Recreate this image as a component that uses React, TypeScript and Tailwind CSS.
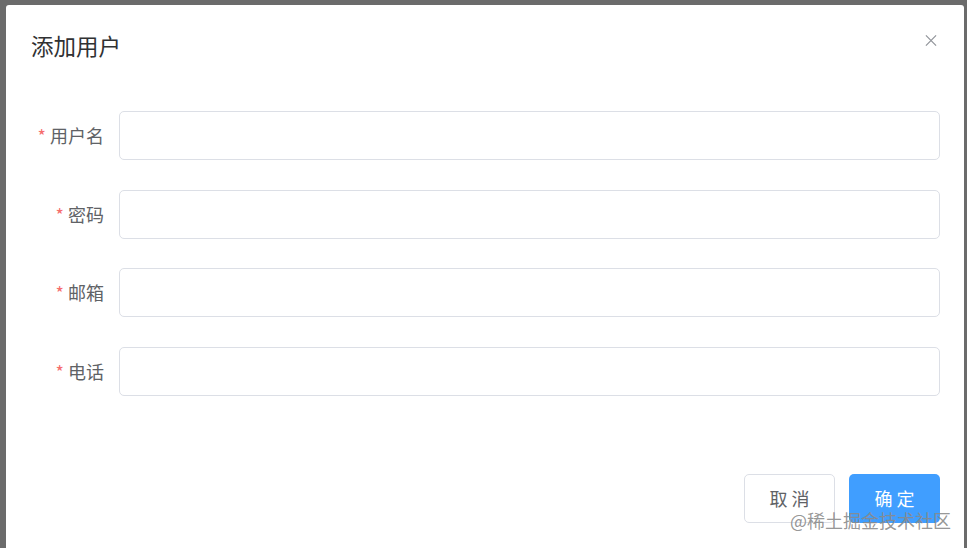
import React from 'react';

const fields = ['用户名', '密码', '邮箱', '电话'];

export default function App() {
    return (
        <div
            className="w-[967px] h-[548px] overflow-hidden bg-[#6b6b6b] pt-[5px] pl-[6px] pr-[3px] relative"
            style={{ fontFamily: '"Noto Sans CJK SC", "Noto Sans", sans-serif' }}
        >
            <div className="relative bg-white rounded-[3px] h-[600px] px-[24px]">
                {/* Header */}
                <div className="pt-[26px] pl-px h-[60px]">
                    <h2 className="text-[22.5px] leading-[29px] text-[#303133]">添加用户</h2>
                </div>
                <button className="absolute top-[28px] right-[27px] w-[12px] h-[14px] flex items-center justify-center text-[#909399]">
                    <svg width="13" height="13" viewBox="0 0 13 13" fill="none" stroke="currentColor" strokeWidth="1.3">
                        <path d="M1 1L12 12M12 1L1 12" />
                    </svg>
                </button>

                {/* Form */}
                <form className="pt-[46px]">
                    {fields.map((label) => (
                        <div key={label} className="flex items-center mb-[29.7px]">
                            <label className="w-[89px] pr-[15px] text-right text-[18px] text-[#606266] whitespace-nowrap">
                                <span className="text-[#f56c6c] mr-[4px]">*</span>
                                {label}
                            </label>
                            <input
                                type="text"
                                className="flex-1 h-[49px] border border-[#dcdfe6] rounded-[5px] outline-none px-[18px] text-[17px]"
                            />
                        </div>
                    ))}
                </form>

                {/* Footer */}
                <div className="flex justify-end gap-[14px] mt-[78px]">
                    <button className="w-[91px] h-[49px] border border-[#dcdfe6] rounded-[5px] bg-white text-[18px] text-[#606266]">
                        取 消
                    </button>
                    <button className="w-[91px] h-[49px] rounded-[5px] bg-[#409eff] text-[18px] text-white">
                        确 定
                    </button>
                </div>
            </div>

            {/* watermark */}
            <div className="absolute right-[16px] top-[508px] text-[18px] leading-[24px] text-[#8a8a8a]/90 whitespace-nowrap">
                @稀土掘金技术社区
            </div>
        </div>
    );
}
